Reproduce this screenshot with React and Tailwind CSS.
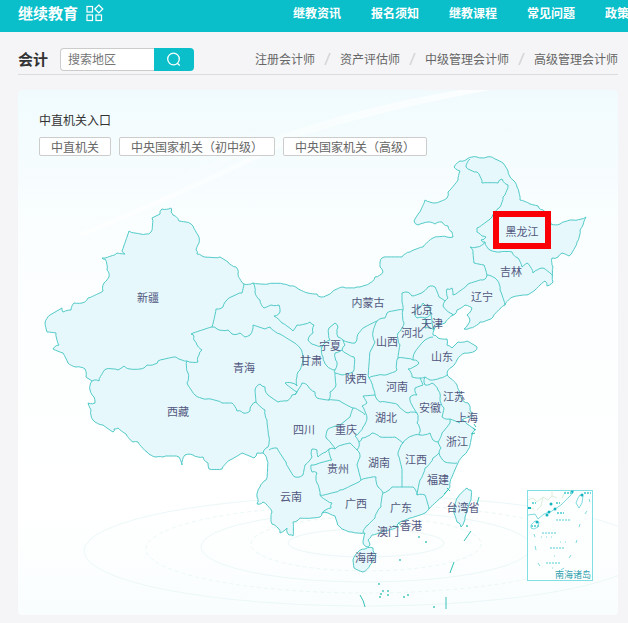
const NAV_ITEMS = ['继教资讯', '报名须知', '继教课程', '常见问题', '政策'];
const EXAM_LINKS = ['注册会计师', '资产评估师', '中级管理会计师', '高级管理会计师'];
const ENTRIES = ['中直机关', '中央国家机关（初中级）', '中央国家机关（高级）'];

const MAINLAND =
  '244,284 253,283 268,284 283,284 290,286 297,288 308,293 317,294 321,297 332,292 343,287 357,287 370,283 375,277 383,272 380,267 380,262 384,257 402,257 410,252 423,247 433,238 447,237 453,237 452,232 448,226 442,222 435,224 428,222 418,225 414,221 419,213 425,200 435,203 447,198 448,192 458,180 460,171 454,167 460,161 467,159 477,157 487,157 495,159 503,163 508,171 513,180 517,187 520,200 530,204 538,206 543,210 551,224 560,224 573,220 586,217 583,225 580,230 577,242 569,256 562,253 558,257 552,258 553,267 553,282 547,286 545,281 540,285 535,290 527,295 513,297 505,305 493,317 480,322 470,328 464,329 470,320 467,315 472,308 465,305 457,310 453,315 445,323 437,326 434,330 433,335 438,338 447,339 447,345 452,348 458,342 467,341 477,347 475,351 465,353 457,360 452,367 447,373 450,378 457,385 460,392 462,399 468,403 470,410 472,417 462,420 467,424 475,430 472,435 470,445 464,455 458,463 452,477 450,487 442,497 429,509 425,513 410,518 400,522 397,527 383,531 372,535 368,540 370,545 367,547 363,543 365,533 352,532 340,527 337,522 335,516 328,513 322,513 320,517 312,518 300,518 293,522 293,536 289,535 287,528 280,533 278,528 272,524 272,512 263,502 257,504 257,497 260,487 266,480 267,460 263,453 257,453 254,458 242,453 230,460 222,469 209,469 208,463 203,457 193,455 185,455 182,465 179,457 163,457 156,457 147,452 138,442 133,442 126,434 118,428 114,429 113,432 103,425 93,420 91,410 88,403 95,403 94,397 90,390 92,381 86,377 85,369 76,367 68,363 63,353 53,349 59,345 56,333 47,332 45,323 50,315 62,308 63,312 71,310 74,303 82,303 88,298 103,291 104,283 109,277 107,270 105,259 102,258 117,253 125,254 122,251 129,231 146,234 151,232 152,218 160,214 162,209 171,208 171,212 173,215 179,221 186,222 193,226 198,235 199,243 196,250 197,254 202,256 220,257 228,262 236,267 238,274 244,284';

const BORDERS = [
  '92,381 99,381 106,369 118,370 124,366 130,369 140,369 147,365 155,364 158,361 176,357 187,361 198,362 199,355 202,350 197,345 194,340 194,337 191,334 212,327 216,309 223,307 227,300 242,293 244,284',
  '187,361 188,373 187,383 195,395 207,399 222,403 232,403 237,411 243,413 250,411 252,405 256,402 255,390 260,384 265,387 268,395 278,402 287,401 292,395 297,392 285,383 292,383 297,386 297,377 300,370 303,360 300,348 293,342 280,334 270,327 265,329 253,325 250,335 245,337 240,333 232,334 228,330 217,329 212,327',
  '256,402 265,410 267,420 269,437 268,447 263,453',
  '253,283 255,292 260,300 264,308 271,305 279,305 280,312 274,316 282,323 293,331 297,325 310,322 314,325 313,333 308,340 315,345 322,347 323,357 327,366 335,370',
  '322,347 330,340 329,328 335,323 338,327 338,337 343,340 345,345 342,350 335,353 337,362 335,370 335,373 336,385 330,392 329,400 317,398 315,392 308,386 302,383 298,390 295,395',
  '342,350 354,357 353,372 342,375 335,373',
  '343,340 355,343 357,337 365,327 377,321 385,318 387,313 403,310 402,302 402,293 407,292 412,296 423,292 428,287 435,287 439,297 445,301 448,298 447,289 452,288 453,295 467,285 483,280 487,275 484,265 474,263 473,253 470,247 477,247 485,242 481,240 486,237 482,236 477,232 477,228 492,217 499,208 503,197 508,185 502,179 498,183 482,183 477,172 466,167 470,159',
  '377,321 373,332 375,342 371,350 369,378 373,388 375,395 363,396 367,403 362,406 367,418 363,427 355,436 359,442 357,450 350,443 342,445 335,449 326,438 328,429 340,425 350,417 353,408 340,401 328,400',
  '353,408 365,415',
  '369,378 383,375 397,370 398,358 400,345 398,333 404,323 403,310',
  '398,358 413,360 419,363 408,369 412,377 420,378 425,377 430,380 440,378 448,374',
  '413,360 415,352 423,342 433,337',
  '445,301 443,306 450,313 453,316',
  '487,275 497,280 500,290 505,305',
  '485,242 490,250 500,252 512,252 518,258 522,267 527,263 533,273 543,268 553,276',
  '415,313 418,307 423,303 430,307 431,313 425,318 417,318 415,313',
  '430,312 432,320 434,330 425,328 425,318',
  '420,378 423,385 415,388 417,395 410,397 412,405 417,413 417,423 420,432 420,435 430,433 433,440 438,442 441,448 439,453 433,458 425,468 420,480 417,495',
  '425,377 425,385 432,383 438,390 440,398 444,408 442,417 450,419 460,423',
  '450,419 450,423 442,433 438,442',
  '375,395 380,402 398,405 408,413 417,413',
  '439,453 445,462 457,463',
  '359,442 362,438 372,433 380,437 395,437 403,443 412,436 420,435',
  '403,443 398,455 402,472 402,487 413,487 417,495 425,495 429,509',
  '402,487 392,487 383,493 381,507 375,518 368,525 363,533',
  '357,450 360,457 357,465 361,480 376,477 378,487 383,493',
  '361,480 340,490 320,495 317,483 317,473 312,472 311,465 317,464 332,460 329,449 335,449',
  '329,449 326,452 318,457 317,450 312,449 312,457 305,465 303,475 295,477 286,462 277,448 269,450',
  '320,495 332,503 331,508 322,513',
];

const ISLANDS = [
  '467,488 471,490 470,502 465,517 461,527 457,522 454,513 458,497 467,488',
  '353,560 358,552 365,549 373,548 376,555 370,565 363,572 354,568 353,560',
];

const PROVINCES = [
  ['新疆', 148, 298], ['西藏', 178, 412], ['青海', 244, 368], ['内蒙古', 368, 303],
  ['甘肃', 311, 361], ['宁夏', 330, 346], ['陕西', 356, 379], ['山西', 387, 342],
  ['河南', 397, 387], ['河北', 412, 333], ['北京', 422, 310], ['天津', 432, 324],
  ['山东', 442, 357], ['辽宁', 482, 297], ['吉林', 511, 272], ['黑龙江', 522, 232],
  ['江苏', 454, 397], ['安徽', 430, 408], ['上海', 467, 418], ['湖北', 386, 418],
  ['浙江', 457, 442], ['江西', 416, 460], ['湖南', 379, 463], ['福建', 438, 480],
  ['重庆', 346, 430], ['四川', 304, 430], ['贵州', 338, 469], ['云南', 291, 497],
  ['广西', 356, 504], ['广东', 401, 508], ['香港', 411, 526], ['澳门', 388, 532],
  ['海南', 366, 558], ['台湾省', 463, 508],
];

const REEFS = [
  [426, 542], [419, 537], [400, 560], [434, 607], [379, 584], [381, 594],
  [383, 591], [388, 591], [388, 595], [380, 597], [404, 597], [408, 595], [467, 526],
];

// Splits every segment and nudges the new points sideways, so borders look surveyed
function roughen(points) {
  const pts = points.split(' ').map((p) => p.split(',').map(Number));
  const out = [pts[0]];
  for (let i = 1; i < pts.length; i++) {
    const [ax, ay] = pts[i - 1];
    const [bx, by] = pts[i];
    const len = Math.hypot(bx - ax, by - ay);
    const steps = Math.max(2, Math.round(len / 2.5));
    for (let s = 1; s < steps; s++) {
      const t = s / steps;
      const wave = Math.sin(ax * 12.9 + by * 78.2 + s * 37.7);
      out.push([
        ax + (bx - ax) * t - ((by - ay) / len) * wave,
        ay + (by - ay) * t + ((bx - ax) / len) * wave,
      ]);
    }
    out.push([bx, by]);
  }
  return out.map(([x, y]) => `${x.toFixed(1)},${y.toFixed(1)}`).join(' ');
}

function GridIcon() {
  return (
    <svg className="ml-2 h-[18px] w-[18px] shrink-0" viewBox="0 0 18 18" fill="none" stroke="white" strokeWidth="1.2" aria-hidden="true">
      <rect x="1" y="2.5" width="5.5" height="5.5" />
      <rect x="1" y="11" width="5.5" height="5.5" />
      <rect x="10" y="11" width="5.5" height="5.5" />
      <path d="M12.8 1l4 4-4 4-4-4z" />
    </svg>
  );
}

function SearchIcon() {
  return (
    <svg className="h-4 w-4" viewBox="0 0 16 16" fill="none" stroke="white" strokeWidth="1.3" aria-hidden="true">
      <circle cx="7.5" cy="8" r="5.8" />
      <path d="M11.2 12.2l2.6 2.4" />
    </svg>
  );
}

function Backdrop() {
  return (
    <g>
      <defs>
        <linearGradient id="sky" x1="0" y1="0" x2="0" y2="1">
          <stop offset="0" stopColor="#f1fbfd" />
          <stop offset="0.3" stopColor="#fbfeff" />
          <stop offset="0.8" stopColor="#ffffff" />
          <stop offset="1" stopColor="#f9fdfe" />
        </linearGradient>
        <linearGradient id="beam" x1="0" y1="1" x2="1" y2="0">
          <stop offset="0" stopColor="#ffffff" stopOpacity="0" />
          <stop offset="1" stopColor="#ffffff" stopOpacity="0.8" />
        </linearGradient>
      </defs>
      <rect x="18" y="90" width="600" height="525" fill="url(#sky)" />
      <path d="M160 190Q280 120 460 90L490 90Q300 125 160 190z" fill="url(#beam)" />
      <path d="M80 235Q190 190 290 140" fill="none" stroke="white" strokeWidth="5" strokeOpacity="0.5" />
      <g fill="none" stroke="#ebf7f8">
        <ellipse cx="366" cy="543" rx="78" ry="14" />
        <ellipse cx="366" cy="544" rx="115" ry="27" strokeDasharray="4 3" />
        <ellipse cx="366" cy="547" rx="165" ry="35" />
        <ellipse cx="366" cy="549" rx="220" ry="44" strokeDasharray="4 3" />
        <ellipse cx="366" cy="551" rx="282" ry="55" />
      </g>
    </g>
  );
}

function SouthSeaInset() {
  return (
    <g>
      <rect x="527.5" y="490.5" width="65" height="90" fill="#fdffff" stroke="#7fdfe2" />
      <g fill="none" stroke="#5fd0d6" strokeWidth="0.8">
        <path d="M528 515l7-1 3 5 6-5 8-3 9-6 6-6 4-4 3-5" />
        <path d="M531 525l4-4 4 1-1 5-4 2-3-1z" />
        <path d="M580 495l3 1-1 7-3 5-3-5 2-5z" />
        <path d="M589 499l1 3M587 511l-2 3M580 524l-1 3M577 540l-1 3M571 555l-2 3M564 568l-3 2M538 563l2 3M535 546l1 4M534 534l1 3" />
        <path d="M528 500l5-2 4 4 6-5 5 3 4-4M552 490v6l5 2M543 497l-2 9-4 4M528 507l6 2M566 491l-4 7" stroke="#d3ead0" />
      </g>
      <g fill="#14b3c0">
        <rect x="528" y="507" width="3" height="2" />
        <circle cx="551" cy="504" r="1.5" />
        <circle cx="555" cy="509" r="1.5" />
        <circle cx="549" cy="512" r="1.5" />
        <circle cx="547" cy="515" r="1.5" />
        <circle cx="537" cy="522" r="1.5" />
        <circle cx="582" cy="495" r="1.5" />
        <circle cx="572" cy="492" r="1.5" />
      </g>
      <g fill="none" stroke="#6fd6da" strokeWidth="2" strokeDasharray="2 1">
        <path d="M564 493h8M584 493h7M557 513h7M556 503h4M532 503h4M531 526h8" />
        <path d="M556 520h14M542 533h15M550 548h15M546 563h14" strokeOpacity="0.6" />
      </g>
      <path d="M541 537h14M560 542h7M554 556h2M552 568h5" stroke="#5fd0d6" strokeWidth="0.8" strokeDasharray="1 4" />
      <text x="573" y="578" textAnchor="middle" fill="#2f9fae" className="text-[9px]">南海诸岛</text>
    </g>
  );
}

function ChinaMap() {
  return (
    <svg className="col-start-1 row-start-1 h-auto w-full" viewBox="18 90 600 525" role="img" aria-label="地区">
      <Backdrop />
      <g fill="#e6f8fb" stroke="#52cac8" strokeLinejoin="round">
        <polygon points={roughen(MAINLAND)} />
        {ISLANDS.map((points) => (
          <polygon key={points} points={roughen(points)} />
        ))}
        {BORDERS.map((points) => (
          <polyline key={points} points={roughen(points)} fill="none" />
        ))}
      </g>
      <g fill="none" stroke="#35c2b8">
        <path d="M454 562l-4 11M471 531l-7 10M446 597v12M360 595q4 6 5 12M479 497l-2 7M473 428l3 2M471 434l4-1M474 424l2 3" />
        <path d="M398 523l3 2M393 526l6 1M447 488l3 3M444 494l4-4" />
      </g>
      {REEFS.map(([x, y]) => (
        <circle key={`${x}-${y}`} cx={x} cy={y} r="0.9" fill="#35c2b8" />
      ))}
      <SouthSeaInset />
      <rect x="496" y="214" width="52" height="32" fill="#e6f8fb" stroke="#fa0006" strokeWidth="6" />
      <g fill="#525780" textAnchor="middle" className="text-[11px]">
        {PROVINCES.map(([name, x, y]) => (
          <text key={name} x={x} y={y + 4}>{name}</text>
        ))}
      </g>
    </svg>
  );
}

export default function App() {
  return (
    <div className="min-h-screen overflow-hidden bg-[#f5f5f7] pb-2 font-['Noto_Sans_CJK_SC',sans-serif] text-xs whitespace-nowrap text-[#666]">
      <header className="flex h-8 items-center bg-[#0abfca] pb-[6px] pl-[18px] text-white">
        <h1 className="shrink-0 text-[15px] font-bold">继续教育</h1>
        <GridIcon />
        <nav className="ml-[189px] flex gap-[30px] font-bold">
          {NAV_ITEMS.map((item) => (
            <a key={item} href="#" className="shrink-0">{item}</a>
          ))}
        </nav>
      </header>

      <main className="pr-[10px] pl-[18px]">
        <div className="flex items-center border-b border-[#dcdcde] pt-[15px] pb-[3px]">
          <h2 className="text-[15px] leading-6 font-bold text-[#333]">会计</h2>
          <form className="ml-3 flex h-[23px]" onSubmit={(e) => e.preventDefault()}>
            <input
              type="text"
              aria-label="搜索地区"
              placeholder="搜索地区"
              className="w-[94px] rounded-l-sm border border-r-0 border-[#ccc] bg-white px-[7px] outline-none placeholder:text-[#757575]"
            />
            <button type="submit" aria-label="搜索" className="flex w-10 items-center justify-center rounded-r-sm bg-[#0abfca]">
              <SearchIcon />
            </button>
          </form>
          <ul className="ml-auto flex">
            {EXAM_LINKS.map((link, i) => (
              <li key={link} className="flex">
                {i > 0 && (
                  <svg className="mx-[9px] h-4 w-[7px]" viewBox="0 0 7 16" stroke="#d8d8da" strokeWidth="1.8" aria-hidden="true">
                    <path d="M1 14L6 2" />
                  </svg>
                )}
                <a href="#">{link}</a>
              </li>
            ))}
          </ul>
        </div>

        <section className="mt-[15px] grid overflow-hidden rounded">
          <ChinaMap />
          <div className="z-10 col-start-1 row-start-1 self-start px-[21px] pt-[22px]">
            <h3 className="text-[#333]">中直机关入口</h3>
            <div className="mt-[9px] flex gap-2">
              {ENTRIES.map((entry) => (
                <button key={entry} type="button" className="h-[19px] rounded-xs border border-[#ccc] bg-white px-[11px] leading-4">
                  {entry}
                </button>
              ))}
            </div>
          </div>
        </section>
      </main>
    </div>
  );
}
